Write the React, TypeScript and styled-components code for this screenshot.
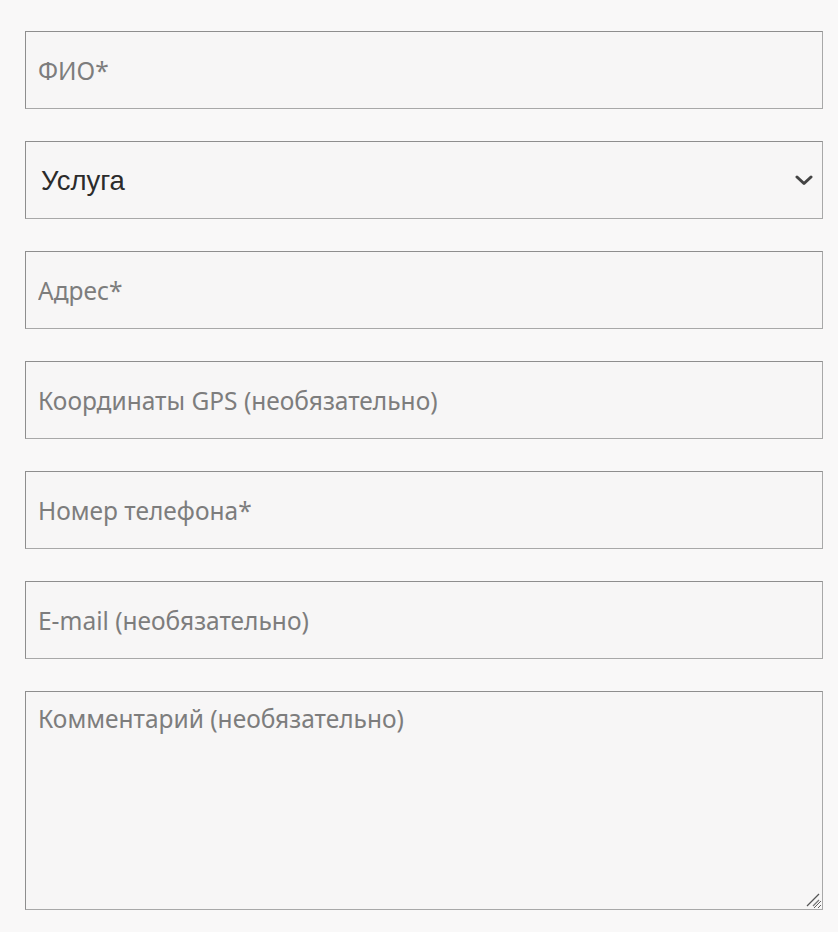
import styled, { createGlobalStyle } from "styled-components";

const GlobalStyle = createGlobalStyle`
  html, body {
    margin: 0;
    padding: 0;
    background: #f9f8f8;
  }
  body {
    font-family: "Noto Sans", "Open Sans", sans-serif;
  }
`;

const Form = styled.form`
  display: flex;
  flex-direction: column;
  gap: 32px;
  padding: 31px 15px 20px 25px;
`;

const fieldBase = `
  box-sizing: border-box;
  width: 100%;
  margin: 0;
  border: 1px solid #a8a8a8;
  border-top-color: #8e8e8e;
  border-left-color: #8e8e8e;
  border-radius: 0;
  background: #f7f6f6;
  outline: none;
  font-family: "Noto Sans", "Open Sans", sans-serif;
  font-size: 24.5px;
  color: #333;

  &::placeholder {
    color: #7d7d7d;
    opacity: 1;
  }
`;

const Input = styled.input`
  ${fieldBase}
  height: 78px;
  padding: 0 12px;
`;

const FieldWrap = styled.div`
  position: relative;
`;

const Select = styled.select`
  ${fieldBase}
  height: 78px;
  padding: 0 40px 0 15px;
  appearance: none;
  font-family: "Liberation Sans", Arial, sans-serif;
  font-size: 27.5px;
  color: #2b2b2b;
`;

const Chevron = styled.svg`
  position: absolute;
  right: 10px;
  top: 50%;
  width: 18px;
  height: 12px;
  transform: translateY(-50%);
  pointer-events: none;
`;

const TextArea = styled.textarea`
  ${fieldBase}
  height: 219px;
  padding: 10px 12px;
  resize: vertical;
  display: block;
`;

const Grip = styled.svg`
  position: absolute;
  right: 2px;
  bottom: 2px;
  width: 16px;
  height: 16px;
  pointer-events: none;
`;

export default function App() {
  return (
    <>
      <GlobalStyle />
      <Form onSubmit={(e) => e.preventDefault()}>
        <Input placeholder="ФИО*" />
        <FieldWrap>
          <Select defaultValue="">
            <option value="">Услуга</option>
          </Select>
          <Chevron viewBox="0 0 18 12">
            <path
              d="M2 3 L9 9.5 L16 3"
              fill="none"
              stroke="#444"
              strokeWidth="3"
              strokeLinecap="round"
              strokeLinejoin="round"
            />
          </Chevron>
        </FieldWrap>
        <Input placeholder="Адрес*" />
        <Input placeholder="Координаты GPS (необязательно)" />
        <Input placeholder="Номер телефона*" />
        <Input placeholder="E-mail (необязательно)" />
        <FieldWrap>
          <TextArea placeholder="Комментарий (необязательно)" />
          <Grip viewBox="0 0 16 16">
            <path d="M2 14 L14 2" stroke="#555" strokeWidth="1.3" />
            <path d="M8 14 L14 8" stroke="#777" strokeWidth="1.3" />
          </Grip>
        </FieldWrap>
      </Form>
    </>
  );
}
